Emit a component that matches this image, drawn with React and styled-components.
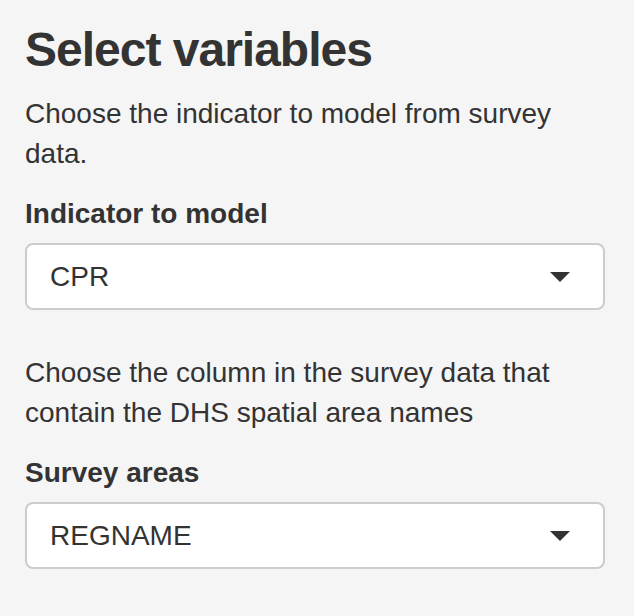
import React from 'react';
import styled, { createGlobalStyle } from 'styled-components';

const GlobalStyle = createGlobalStyle`
  html, body {
    margin: 0;
    padding: 0;
    background: #f5f5f5;
  }
  body {
    font-family: "Liberation Sans", Arial, Helvetica, sans-serif;
    color: #333;
    font-size: 28px;
    line-height: 40px;
  }
`;

const Panel = styled.div`
  width: 634px;
  min-height: 616px;
  box-sizing: border-box;
  padding: 23px 29px 0 25px;
  background: #f5f5f5;
`;

const Heading = styled.h3`
  margin: 0 0 18px;
  font-size: 48px;
  line-height: 53px;
  font-weight: 700;
  letter-spacing: -1px;
  color: #333;
`;

const HelpText = styled.p`
  margin: 0 0 20px;
  font-size: 28px;
  line-height: 40px;
`;

const Field = styled.div`
  margin-bottom: ${p => p.$gap || 30}px;
`;

const Label = styled.label`
  display: block;
  margin-bottom: 9px;
  font-weight: 700;
  font-size: 28px;
  line-height: 40px;
`;

const SelectBox = styled.div`
  display: flex;
  align-items: center;
  justify-content: space-between;
  height: 67px;
  box-sizing: border-box;
  padding: 0 33px 0 23px;
  background: #fff;
  border: 2px solid #ccc;
  border-radius: 8px;
  font-size: 28px;
`;

const Caret = styled.span`
  width: 0;
  height: 0;
  border-left: 10px solid transparent;
  border-right: 10px solid transparent;
  border-top: 10px solid #333;
`;

const Select = ({ value }) => (
  <SelectBox>
    <span>{value}</span>
    <Caret />
  </SelectBox>
);

export default function App() {
  return (
    <>
      <GlobalStyle />
      <Panel>
        <Heading>Select variables</Heading>
        <HelpText>Choose the indicator to model from survey data.</HelpText>
        <Field $gap={43}>
          <Label>Indicator to model</Label>
          <Select value="CPR" />
        </Field>
        <HelpText>Choose the column in the survey data that contain the DHS spatial area names</HelpText>
        <Field>
          <Label>Survey areas</Label>
          <Select value="REGNAME" />
        </Field>
      </Panel>
    </>
  );
}
